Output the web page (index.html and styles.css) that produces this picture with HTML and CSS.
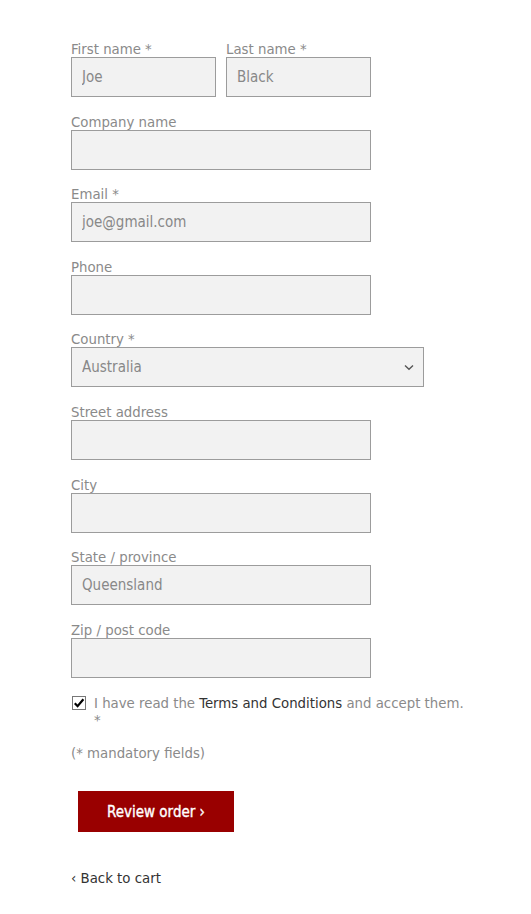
FILE: index.html
```html
<!DOCTYPE html>
<html>
<head>
<meta charset="utf-8">
<link rel="stylesheet" href="styles.css">
</head>
<body>
<form class="checkout">
  <div class="row">
    <div class="field half">
      <label class="lbl">First name *</label>
      <input class="inp" type="text" value="Joe">
    </div>
    <div class="field half">
      <label class="lbl">Last name *</label>
      <input class="inp" type="text" value="Black">
    </div>
  </div>
  <div class="field">
    <label class="lbl">Company name</label>
    <input class="inp" type="text" value="">
  </div>
  <div class="field">
    <label class="lbl">Email *</label>
    <input class="inp" type="text" value="joe@gmail.com">
  </div>
  <div class="field">
    <label class="lbl">Phone</label>
    <input class="inp" type="text" value="">
  </div>
  <div class="field">
    <label class="lbl">Country *</label>
    <div class="select-wrap">
      <select class="inp sel"><option>Australia</option></select>
      <svg class="chev" width="10" height="7" viewBox="0 0 10 7"><path d="M1 1.5 L5 5.2 L9 1.5" fill="none" stroke="#555" stroke-width="1.4"/></svg>
    </div>
  </div>
  <div class="field">
    <label class="lbl">Street address</label>
    <input class="inp" type="text" value="">
  </div>
  <div class="field">
    <label class="lbl">City</label>
    <input class="inp" type="text" value="">
  </div>
  <div class="field">
    <label class="lbl">State / province</label>
    <input class="inp" type="text" value="Queensland">
  </div>
  <div class="field">
    <label class="lbl">Zip / post code</label>
    <input class="inp" type="text" value="">
  </div>
  <div class="terms">
    <span class="cb"><svg width="12" height="12" viewBox="0 0 12 12"><path d="M1.8 6.2 L4.6 9.2 L10.4 2.2" fill="none" stroke="#000" stroke-width="2.2"/></svg></span>
    <span class="terms-text">I have read the <a class="link">Terms and Conditions</a> and accept them.<span class="star">*</span></span>
  </div>
  <p class="mandatory">(* mandatory fields)</p>
  <button type="button" class="btn">Review order ›</button>
  <a class="back">‹ Back to cart</a>
</form>
</body>
</html>
```
FILE: styles.css
```css
html, body {
  margin: 0;
  padding: 0;
  background: #fff;
}
body {
  font-family: "DejaVu Sans Condensed", "DejaVu Sans", Verdana, sans-serif;
  font-stretch: condensed;
  color: #888;
}
.checkout {
  padding: 40px 0 0 71px;
  display: flex;
  flex-direction: column;
  align-items: flex-start;
}
.row {
  display: flex;
  gap: 10px;
}
.field {
  display: flex;
  flex-direction: column;
  margin-bottom: 15.6px;
}
.lbl {
  font-size: 14.8px;
  line-height: 17px;
  color: #8a8a8a;
}
.inp {
  box-sizing: border-box;
  width: 300px;
  height: 40px;
  margin: 0;
  border: 1px solid #9c9c9c;
  background: #f2f2f2;
  padding: 0 10px;
  font-family: inherit;
  font-stretch: condensed;
  font-size: 15px;
  color: #888;
  outline: none;
}
.half .inp {
  width: 145px;
}
.select-wrap {
  position: relative;
}
.sel {
  width: 353px;
  appearance: none;
  -webkit-appearance: none;
  border-radius: 0;
}
.chev {
  position: absolute;
  right: 10px;
  top: 17px;
}
.terms {
  display: flex;
  align-items: flex-start;
  gap: 8px;
  margin-top: 1px;
  padding-left: 1px;
}
.cb {
  box-sizing: border-box;
  width: 14px;
  height: 14px;
  border: 1px solid #777;
  background: #fff;
  display: flex;
  align-items: center;
  justify-content: center;
  margin-top: 2px;
}
.terms-text {
  font-size: 14.8px;
  line-height: 17px;
  color: #8a8a8a;
}
.link {
  color: #333;
}
.star {
  display: block;
}
.mandatory {
  margin: 16px 0 0 0;
  font-size: 14.8px;
  line-height: 17px;
  color: #8a8a8a;
}
.btn {
  margin: 30px 0 0 7px;
  width: 156px;
  height: 41px;
  border: 0;
  background: #990000;
  color: #fff;
  font-family: inherit;
  font-stretch: condensed;
  font-size: 15px;
  font-weight: normal;
  -webkit-text-stroke: 0.35px #fff;
  padding: 0;
}
.back {
  margin-top: 37px;
  font-size: 14.8px;
  line-height: 17px;
  color: #333;
}
```
